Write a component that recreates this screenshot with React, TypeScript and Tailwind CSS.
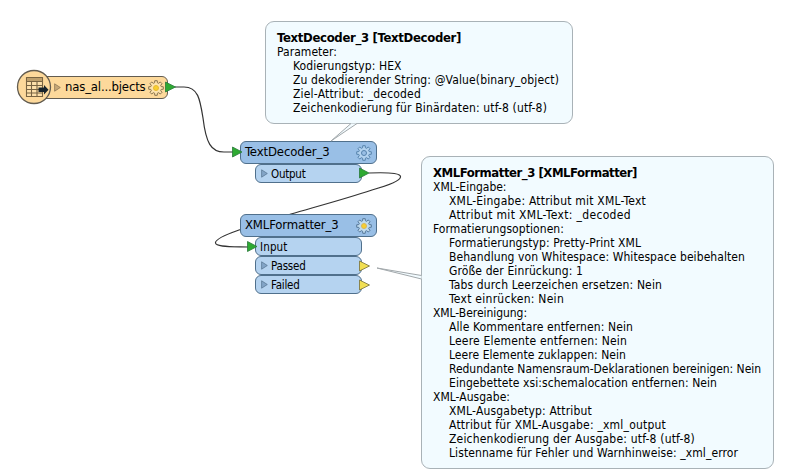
import { useLayoutEffect, useRef } from "react";
import type { ReactNode } from "react";

type Row = { text: string; width: number; indent?: boolean };

/** Single line of text, tracked so that it fills the given width. */
function Label({ text, width, className = "" }: { text: string; width: number; className?: string }) {
  const ref = useRef<HTMLSpanElement>(null);
  useLayoutEffect(() => {
    const el = ref.current;
    if (!el) return;
    el.style.letterSpacing = "0px";
    const natural = el.getBoundingClientRect().width;
    el.style.letterSpacing = `${(width - natural) / text.length}px`;
  }, [text, width]);
  return (
    <span ref={ref} className={`inline-block whitespace-pre ${className}`}>
      {text}
    </span>
  );
}

const decoderRows: Row[] = [
  { text: "Parameter:", width: 60 },
  { text: "Kodierungstyp: HEX", width: 108.5, indent: true },
  { text: "Zu dekodierender String: @Value(binary_object)", width: 266, indent: true },
  { text: "Ziel-Attribut: _decoded", width: 128, indent: true },
  { text: "Zeichenkodierung für Binärdaten: utf-8 (utf-8)", width: 254, indent: true },
];

const formatterRows: Row[] = [
  { text: "XML-Eingabe:", width: 73.5 },
  { text: "XML-Eingabe: Attribut mit XML-Text", width: 197, indent: true },
  { text: "Attribut mit XML-Text: _decoded", width: 182, indent: true },
  { text: "Formatierungsoptionen:", width: 131 },
  { text: "Formatierungstyp: Pretty-Print XML", width: 192, indent: true },
  { text: "Behandlung von Whitespace: Whitespace beibehalten", width: 296, indent: true },
  { text: "Größe der Einrückung: 1", width: 134, indent: true },
  { text: "Tabs durch Leerzeichen ersetzen: Nein", width: 213, indent: true },
  { text: "Text einrücken: Nein", width: 115, indent: true },
  { text: "XML-Bereinigung:", width: 94 },
  { text: "Alle Kommentare entfernen: Nein", width: 184, indent: true },
  { text: "Leere Elemente entfernen: Nein", width: 178, indent: true },
  { text: "Leere Elemente zuklappen: Nein", width: 177, indent: true },
  { text: "Redundante Namensraum-Deklarationen bereinigen: Nein", width: 312, indent: true },
  { text: "Eingebettete xsi:schemalocation entfernen: Nein", width: 268, indent: true },
  { text: "XML-Ausgabe:", width: 77 },
  { text: "XML-Ausgabetyp: Attribut", width: 143, indent: true },
  { text: "Attribut für XML-Ausgabe: _xml_output", width: 217, indent: true },
  { text: "Zeichenkodierung der Ausgabe: utf-8 (utf-8)", width: 246, indent: true },
  { text: "Listenname für Fehler und Warnhinweise: _xml_error", width: 289, indent: true },
];

function Note({ title, titleWidth, rows, className }: { title: string; titleWidth: number; rows: Row[]; className: string }) {
  return (
    <section className={`absolute rounded-[9px] border border-[#a9b2b7] bg-[#f2fbff] pt-2 pl-[11px] ${className}`}>
      <h2 className="flex h-[15px] items-center text-[13px] leading-[15px] font-bold">
        <Label text={title} width={titleWidth} />
      </h2>
      {rows.map((r) => (
        <div key={r.text} className={`flex h-[14px] items-center text-[12px] leading-[14px] ${r.indent ? "pl-4" : ""}`}>
          <Label text={r.text} width={r.width} />
        </div>
      ))}
    </section>
  );
}

function gearPath() {
  const pts: string[] = [];
  for (let i = 0; i < 8; i++) {
    const corners = [
      [-0.26, 5.4],
      [-0.17, 7.4],
      [0.17, 7.4],
      [0.26, 5.4],
    ];
    for (const [d, r] of corners) {
      const a = (i * Math.PI) / 4 + d;
      pts.push(`${(8 + r * Math.sin(a)).toFixed(2)} ${(8 - r * Math.cos(a)).toFixed(2)}`);
    }
  }
  return `M${pts.join("L")}Z`;
}

function Gear({ stroke, fill, hub, hubStroke }: { stroke: string; fill: string; hub: string; hubStroke: string }) {
  return (
    <svg className="h-4 w-4 shrink-0" viewBox="0 0 16 16">
      <path d={gearPath()} fill={fill} stroke={stroke} strokeWidth="1" strokeLinejoin="round" />
      <circle cx="8" cy="8" r="2.5" fill={hub} stroke={hubStroke} strokeWidth="1" />
    </svg>
  );
}

function Expander({ fill = "#83a5c7", stroke = "#5b7896" }: { fill?: string; stroke?: string }) {
  return (
    <svg className="h-[9px] w-[7px] shrink-0" viewBox="0 0 7 9">
      <path d="M.6.8 6.3 4.5.6 8.2Z" fill={fill} stroke={stroke} strokeWidth=".8" />
    </svg>
  );
}

function Transformer({ name, width, className, gear, children }: { name: string; width: number; className: string; gear: ReactNode; children: ReactNode }) {
  return (
    <div className={`absolute flex w-[137px] flex-col ${className}`}>
      <div className="flex h-[23px] items-center justify-between rounded-[6px] border border-[#50708c] bg-[#99bfe6] pr-1 pl-1">
        <Label text={name} width={width} className="-mt-px text-[13px] leading-4" />
        {gear}
      </div>
      <div className="flex w-[122px] flex-col self-end pr-[15px]">{children}</div>
    </div>
  );
}

function Port({ name, width, closed = true }: { name: string; width: number; closed?: boolean }) {
  return (
    <div className={`flex h-[19px] items-center gap-[3px] rounded-[6px] border border-[#50708c] bg-[#b5d3f0] ${closed ? "pl-[5px]" : "pl-1"}`}>
      {closed && <Expander />}
      <Label text={name} width={width} className="text-[11.5px] leading-4" />
    </div>
  );
}

export default function App() {
  return (
    <main className="relative h-[475px] w-[798px] overflow-hidden bg-white text-black [font-family:'DejaVu_Sans_Condensed','DejaVu_Sans',Tahoma,sans-serif]">
      <svg className="absolute inset-0 h-full w-full" viewBox="0 0 798 475" fill="none" stroke="#333" strokeWidth="1.2">
        <path d="M175 87H184C198 87 200 99 203 118C206 143 211 152 224 152H234" />
        <path d="M369 173C394 172 401 174 400.5 177C400 181 388 185.500 372 190C345 199 315 207 291 214L239 230C222 236 215 240 215.500 243C216 247 230 246.500 248 247" />
      </svg>

      <div className="absolute top-[76px] left-[35px] flex h-[23px] w-[133px] items-center rounded-[6px] border border-[#625c50] bg-[#fdd99b] pl-[18px]">
        <Expander fill="#c6a776" stroke="#8d7656" />
        <Label text="nas_al...bjects" width={80.5} className="-mt-px ml-1 text-[13px] leading-4" />
        <span className="ml-[2px] flex">
          <Gear stroke="#88734f" fill="#fde3ad" hub="#f8cf30" hubStroke="#e7b931" />
        </span>
      </div>
      <svg className="absolute top-[69px] left-[16px] h-9 w-9" viewBox="0 0 36 36">
        <circle cx="18" cy="18" r="16.5" fill="#fdd99b" stroke="#625c50" strokeWidth="1.3" />
        <path d="M10.500 8.500H26.500V27.500H10.500Z" fill="#fde0aa" stroke="#786442" strokeWidth="1.1" />
        <path d="M10.500 8.500H26.500V12.500H10.500Z" fill="#bd9f6c" stroke="#786442" strokeWidth="1" />
        <path d="M15.500 12.500V27.500M21 12.500V27.500M10.500 16.500H26.500M10.500 20.500H26.500M10.500 24H26.500" stroke="#786442" strokeWidth="1.1" />
        <path d="M22.500 18.500H28V16L32.500 20.700 28 25.400V23H22.500Z" fill="#18242b" />
      </svg>

      <Transformer name="TextDecoder_3" width={84.5} className="top-[141px] left-[240px]" gear={<Gear stroke="#5683ac" fill="#b2d2ef" hub="#99bfe6" hubStroke="#5683ac" />}>
        <Port name="Output" width={34.5} />
      </Transformer>

      <Transformer name="XMLFormatter_3" width={93.5} className="top-[214px] left-[240px]" gear={<Gear stroke="#56789a" fill="#c0dbee" hub="#f8cf30" hubStroke="#d9b75a" />}>
        <Port name="Input" width={27.5} closed={false} />
        <Port name="Passed" width={34.5} />
        <Port name="Failed" width={28.5} />
      </Transformer>

      <Note title="TextDecoder_3 [TextDecoder]" titleWidth={184} rows={decoderRows} className="top-[21px] left-[265px] h-[103px] w-[308px]" />
      <Note title="XMLFormatter_3 [XMLFormatter]" titleWidth={204} rows={formatterRows} className="top-[156px] left-[421px] h-[313px] w-[353px]" />

      <svg className="absolute inset-0 h-full w-full" viewBox="0 0 798 475">
        <g fill="#f2fbff" stroke="#a2a8ab" strokeWidth="1">
          <path d="M351 123.500 331 141 357 123.500" />
          <path d="M421.500 275.500 377 268 421.500 279" />
        </g>
        <g stroke="#28783a" strokeWidth=".8" fill="#2eaa32">
          <path d="M165.500 82 175.500 87 165.500 92Z" />
          <path d="M232.500 147 242 152 232.500 157Z" />
          <path d="M359.500 168 369 173 359.500 178Z" />
          <path d="M247.500 241.500 257 246.500 247.500 251.500Z" />
        </g>
        <g stroke="#817b43" strokeWidth=".9" fill="#f2df52">
          <path d="M359.500 261 369.500 266 359.500 271Z" />
          <path d="M359.500 280 369.500 285 359.500 290Z" />
        </g>
      </svg>
    </main>
  );
}
